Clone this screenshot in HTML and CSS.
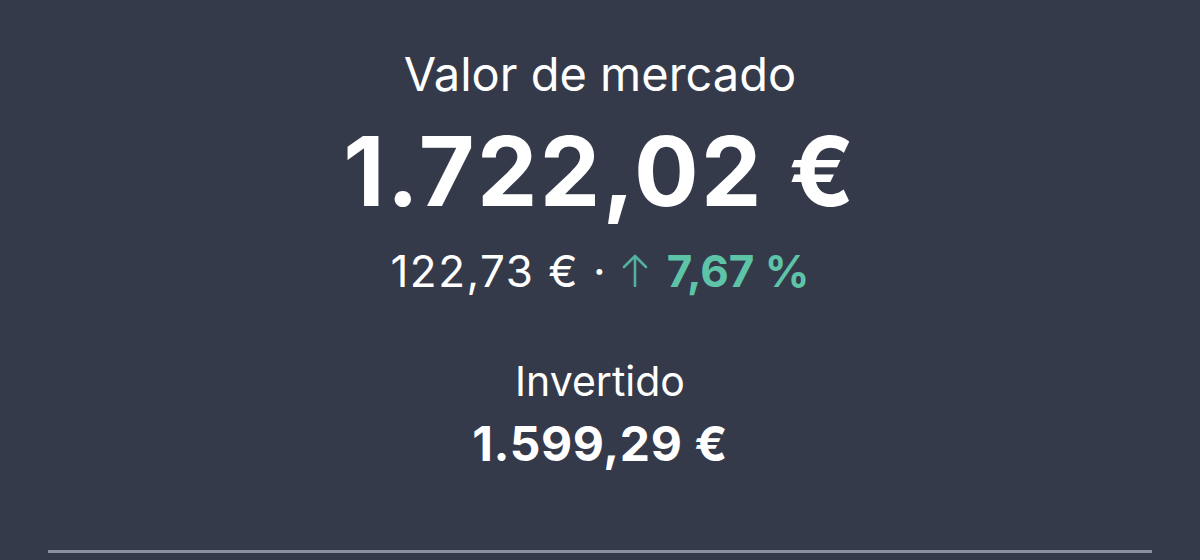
FILE: index.html
```html
<!DOCTYPE html>
<html>
  <head>
    <meta charset='utf-8'>
    <title>Cartera</title>
    <link rel="stylesheet" href="styles.css">
  </head>
  <body>
    <div id='summary'>
      <div class='label'>Valor de mercado</div>
      <div id='market_value'>1.722,02 €</div>
      <div id='change'>
        <span class='amount'>122,73 €</span>
        <span class='dot'>·</span>
        <svg class='arrow' width='26' height='33' viewBox='0 0 26 33'>
          <path d='M13 32 V2 M2 13 L13 2 L24 13' fill='none' stroke='#52b09c' stroke-width='2.6' stroke-linecap='round' stroke-linejoin='round'/>
        </svg>
        <b class='green'>7,67 %</b>
      </div>
      <div class='label small'>Invertido</div>
      <div id='invested'>1.599,29 €</div>
    </div>
    <div id='divider'></div>
  </body>
</html>
```

FILE: styles.css
```css
body {
  margin: 0;
  background: #343a4a;
  font-family: Inter, Lato, sans-serif;
  color: #fff;
  height: 560px;
  overflow: hidden;
}

#summary {
  display: flex;
  flex-direction: column;
  align-items: center;
  padding-top: 44px;
}

.label {
  font-size: 47px;
  line-height: 60px;
}

.label.small {
  font-size: 41px;
  line-height: 50px;
  margin-top: 60px;
}

#market_value {
  font-size: 96px;
  font-weight: bold;
  letter-spacing: 2.3px;
  line-height: 110px;
  margin-top: 12px;
}

#change {
  display: flex;
  align-items: center;
  font-size: 44px;
  line-height: 50px;
  margin-top: 20px;
}

#change .amount {
  letter-spacing: 1.5px;
}

#change .dot {
  margin: 0 16px 0 14px;
}

#change .arrow {
  margin: 0 19px 2px 0;
}

#invested {
  font-size: 48px;
  font-weight: bold;
  letter-spacing: 0.6px;
  line-height: 56px;
  margin-top: 10px;
}

.green {
  color: #5ec4a8;
}

#divider {
  height: 3px;
  background: #8a8f9e;
  margin: 0 48px;
  position: absolute;
  left: 0;
  right: 0;
  top: 550px;
}
```
